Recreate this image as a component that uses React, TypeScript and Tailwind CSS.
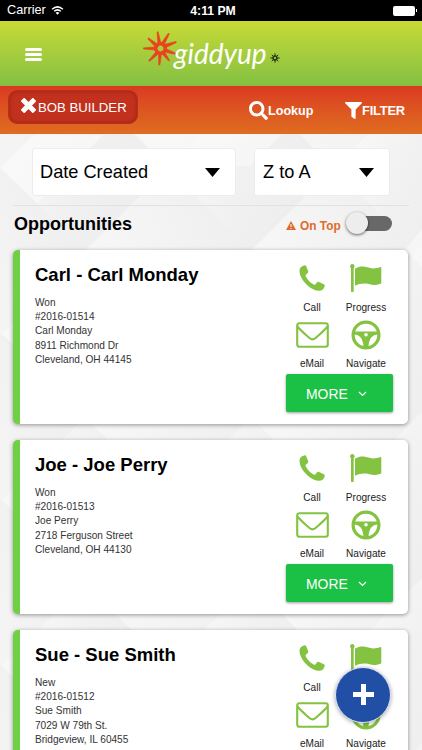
import type { ReactNode } from "react";
import { FaSearch, FaFilter } from "react-icons/fa";

const opportunities = [
  {
    title: "Carl - Carl Monday",
    lines: ["Won", "#2016-01514", "Carl Monday", "8911 Richmond Dr", "Cleveland, OH 44145"],
  },
  {
    title: "Joe - Joe Perry",
    lines: ["Won", "#2016-01513", "Joe Perry", "2718 Ferguson Street", "Cleveland, OH 44130"],
  },
  {
    title: "Sue - Sue Smith",
    lines: ["New", "#2016-01512", "Sue Smith", "7029 W 79th St.", "Bridgeview, IL 60455"],
  },
];

function PhoneIcon() {
  return (
    <svg width="26" height="26" viewBox="0 0 26 26" fill="currentColor">
      <path d="M5.200 .4C6.300 .1 6.800 .4 7.200 1.300L9.100 6C9.500 7 9.300 7.500 8.500 8.200L7 9.600C6.400 10.200 6.400 10.800 6.800 11.600C8.800 15.300 11.300 17.700 14.600 19.500C15.400 19.900 16 19.800 16.500 19.200L17.900 17.500C18.500 16.800 19.100 16.700 20 17.100L24.800 19.200C25.600 19.600 25.900 20.100 25.700 21C25 24 23.300 25.700 20.200 25.800C16.500 25.900 12 23.700 8 19.900C3.700 15.700 .7 10.600 .5 6.200C.4 3 1.900 1.200 5.200 .4Z" />
    </svg>
  );
}

function FlagIcon() {
  return (
    <svg width="32" height="28" viewBox="0 0 32 28" fill="currentColor">
      <circle cx="2.3" cy="2.3" r="2.2" />
      <rect x="1" y="3" width="2.7" height="25" rx="0.8" />
      <path d="M5 4.600C8.500 2.600 11.500 2.200 15 2.700C20 3.600 23 5.900 30.500 3Q31.300 2.800 31.300 3.700V18.700Q31.300 19.500 30.500 19.800C23 22.500 20 19.900 15.500 19.500C11.500 19.300 8.500 20.100 5 21.800Z" />
    </svg>
  );
}

function MailIcon() {
  return (
    <svg className="mt-[2px]" width="33" height="26" viewBox="0 0 33 26" fill="none" stroke="currentColor" strokeWidth="2.100">
      <rect x="1.200" y="1.200" width="30.600" height="23.600" rx="2.200" />
      <path d="M1.500 4.500C5.500 9.500 10 12.800 13.500 16Q16.500 18.600 19.500 16C23 12.800 27.500 9.500 31.500 4.500" />
    </svg>
  );
}

function WheelIcon() {
  return (
    <svg className="mt-[2px]" width="30" height="30" viewBox="0 0 30 30" fill="none" stroke="currentColor">
      <circle cx="15" cy="15" r="12.900" strokeWidth="3.200" />
      <path
        d="M3 11.500H27V14.600C21.500 14.600 17.900 18.500 17.500 27H12.500C12.100 18.500 8.500 14.600 3 14.600Z"
        fill="currentColor"
        stroke="none"
      />
      <circle cx="15" cy="14.800" r="1.800" fill="#fff" stroke="none" />
    </svg>
  );
}

function Sunburst() {
  return (
    <svg className="h-[35px] w-[35px] shrink-0" viewBox="-17.5 -17.5 35 35">
      <circle r="4.700" fill="none" stroke="#e8441f" strokeWidth="3.400" />
      <g fill="#e8441f" stroke="#e8441f" strokeWidth=".7" strokeLinejoin="round">
        <path d="M-2.600-5L-3.400-16.500L-2.400-16.700L.4-5z" />
        <path d="M.8-5.300L7.800-15.200L8.800-14.700L3.600-3.600z" />
        <path d="M3.800-4L15.400-7L15.900-6L5.500-1z" />
        <path d="M5.600 .2L15.800 5L15.400 6L4.300 3.500z" />
        <path d="M4.200 3.400L9.100 12L8.200 12.600L1.500 5.200z" />
        <path d="M1 5.300L-.7 16.500L-1.700 16.500L-1.900 5z" />
        <path d="M-1.900 5.200L-11 12.900L-11.800 12.100L-4.500 3.300z" />
        <path d="M-5.200 1.500L-17 .4L-17-.6L-5.300-1.400z" />
        <path d="M-5.200-1.500L-12.800-9.900L-12-10.600L-3-4.400z" />
      </g>
    </svg>
  );
}

// 45 degree tiles, 166px from corner to corner
function Backdrop() {
  return (
    <svg className="absolute inset-0" width="422" height="750" viewBox="0 0 422 750">
      <defs>
        <linearGradient id="tileA" x1="0" y1="0.3" x2="1" y2="0.7">
          <stop offset="0" stopColor="#fafafa" />
          <stop offset="0.45" stopColor="#f1f1f2" />
          <stop offset="1" stopColor="#ececee" />
        </linearGradient>
        <linearGradient id="tileB" x1="0" y1="0.7" x2="1" y2="0.3">
          <stop offset="0" stopColor="#f8f8f8" />
          <stop offset="1" stopColor="#eeeeef" />
        </linearGradient>
      </defs>
      <rect width="422" height="750" fill="#f4f4f5" />
      {[168, 334, 500, 666, 832].map((y) =>
        [2, 168, 334].map((x) => (
          <g key={`${x}-${y}`}>
            <path d={`M${x} ${y}l83-83 83 83-83 83z`} fill="url(#tileA)" />
            <path d={`M${x - 83} ${y - 83}l83-83 83 83-83 83z`} fill="url(#tileB)" />
          </g>
        ))
      )}
      <path d="M0 168l33-33h70l-66 68zM422 229l-17 21 17 17z" fill="#fafafa" opacity="0.7" />
      <path d="M137 134h145l-32 32h-83z" fill="#fafafa" opacity="0.6" />
    </svg>
  );
}

function Action({ label, children }: { label: string; children: ReactNode }) {
  return (
    <div className="flex h-14 w-[54px] flex-col items-center text-[#84c341]">
      <div className="mb-[8px] flex h-[30px] items-center">{children}</div>
      <span className="whitespace-nowrap text-[10.100px] leading-[14px] text-[#222]">{label}</span>
    </div>
  );
}

function Card({ title, lines }: { title: string; lines: string[] }) {
  return (
    <article className="flex h-[174px] shrink-0 justify-between rounded-[5px] border-l-[7px] border-[#6fd044] bg-white px-[15px] shadow-[0_1px_4px_rgba(0,0,0,0.4)]">
      <div className="pt-[13px]">
        <h2 className="mb-[9px] whitespace-nowrap text-[18.500px] font-bold leading-6 text-black">{title}</h2>
        {lines.map((line) => (
          <p key={line} className="text-[10.100px] leading-[14.200px] text-[#333]">
            {line}
          </p>
        ))}
      </div>
      <div className="flex w-[108px] flex-col pt-[13px]">
        <div className="grid grid-cols-2">
          <Action label="Call"><PhoneIcon /></Action>
          <Action label="Progress"><FlagIcon /></Action>
          <Action label="eMail"><MailIcon /></Action>
          <Action label="Navigate"><WheelIcon /></Action>
        </div>
        <button className="-mt-px ml-px flex h-[38px] shrink-0 items-center gap-[10px] rounded-[2px] bg-[#1bc145] pl-[20px] pt-[2px] text-[13.900px] text-white shadow-[0_1px_3px_rgba(0,0,0,0.4)]">
          MORE
          <svg width="9" height="6" viewBox="0 0 9 6" fill="none" stroke="currentColor" strokeWidth="1.200">
            <path d="M1 1l3.500 3.500L8 1" />
          </svg>
        </button>
      </div>
    </article>
  );
}

export default function App() {
  return (
    <div className="relative h-[750px] w-[422px] overflow-hidden bg-[#f3f3f4] font-['Liberation_Sans',sans-serif]">
      <Backdrop />
      <div className="relative flex flex-col">
        <div className="grid h-[21px] grid-cols-3 items-center bg-black pl-[7px] pr-[5px] text-white">
          <div className="flex items-center gap-[5px] pt-px text-[12.700px]">
            Carrier
            <svg width="13" height="9" viewBox="0 0 12 9" fill="none" stroke="white" strokeWidth="1.500">
              <path d="M.6 3.200Q6-1.500 11.400 3.200M2.700 5.300Q6 2.500 9.300 5.300" />
              <path d="M6 8.700L4.100 6.700Q6 5.300 7.900 6.700z" fill="white" stroke="none" />
            </svg>
          </div>
          <span className="pl-[2px] pt-px text-center text-[12.200px] font-bold">4:11 PM</span>
          <div className="flex items-center justify-end gap-px">
            <div className="h-[10px] w-[22px] rounded-[2px] bg-white" />
            <div className="h-[3px] w-px bg-white" />
          </div>
        </div>

        <header className="flex h-[65px] bg-linear-to-b from-[#c7da35] to-[#82c042]">
          <button className="ml-[25px] mt-[27px] flex h-[13px] w-[17px] flex-col justify-between">
            <span className="h-[3px] w-full rounded-sm bg-white" />
            <span className="h-[3px] w-full rounded-sm bg-white" />
            <span className="h-[3px] w-full rounded-sm bg-white" />
          </button>
          <div className="ml-[101px] flex pt-[10px]">
            <Sunburst />
            <span className="-ml-[4px] mt-[4px] w-[96px] font-['Lato','Liberation_Sans',sans-serif] text-[28px] italic leading-9 text-white">
              giddyup
            </span>
            <svg className="mt-[22px]" width="10" height="10" viewBox="-5 -5 10 10" fill="none" stroke="#27351a">
              <circle r="1.900" strokeWidth="1.500" />
              <path d="M0-2V-4.700M0 2V4.700M-2 0H-4.700M2 0H4.700M-1.500-1.500L-3.300-3.300M1.500-1.500L3.300-3.300M-1.500 1.500L-3.300 3.300M1.500 1.500L3.300 3.300" />
            </svg>
          </div>
        </header>

        <nav className="flex h-12 bg-linear-to-b from-[#da3921] to-[#df6c21] text-white">
          <button className="ml-2 mt-1 flex h-[34px] w-[130px] items-center rounded-[9px] border border-[#b6301b] bg-[#c2311d] pl-3 text-[13.200px] shadow-[inset_0_0_4px_rgba(100,0,0,0.4)]">
            <svg className="-mt-1 mr-[2px]" width="15" height="15" viewBox="0 0 15 15">
              <path d="M3.200 3.200L11.800 11.800M11.800 3.200L3.200 11.800" stroke="white" strokeWidth="5" strokeLinecap="square" />
            </svg>
            <span className="pt-px">BOB BUILDER</span>
          </button>
          <button className="ml-[111px] flex w-[65px] items-center pt-px text-[12.600px] font-bold">
            <FaSearch size={19} />
            <span className="pt-px">Lookup</span>
          </button>
          <button className="ml-[31px] flex items-center pt-px text-[12.900px] font-bold tracking-[-0.2px]">
            <FaFilter size={17} />
            FILTER
          </button>
        </nav>

        <main className="px-[13px]">
          <div className="flex h-[72px] gap-[19px] border-b border-[#e2e2e3] pl-[19px] pt-[14px]">
            <div className="flex h-12 w-[204px] items-center justify-between rounded-[3px] border border-[#ececec] bg-white pl-[7px] pr-[15px] text-[18.200px] text-black">
              <span className="pt-[2px]">Date Created</span>
              <svg width="15" height="9" viewBox="0 0 15 9"><path d="M0 0h15L7.500 9z" /></svg>
            </div>
            <div className="-ml-px flex h-12 w-[136px] items-center justify-between rounded-[3px] border border-[#ececec] bg-white pl-[8px] pr-[15px] text-[18.200px] text-black">
              <span className="pt-[2px]">Z to A</span>
              <svg width="15" height="9" viewBox="0 0 15 9"><path d="M0 0h15L7.500 9z" /></svg>
            </div>
          </div>
          <div className="flex h-11 items-start">
            <h1 className="mt-[6px] w-[273px] pl-px text-[18px] font-bold leading-6 text-black">Opportunities</h1>
            <svg className="mt-[15px]" width="10" height="9" viewBox="0 0 10 9">
              <path d="M5 0L10 9H0z" fill="#df6b2a" />
              <path d="M5 3v3M5 7v1" stroke="white" />
            </svg>
            <span className="ml-1 mt-[12px] text-[11.900px] font-bold leading-4 text-[#df6b2a]">On Top</span>
            <div className="ml-[5px] mt-[5px] flex h-6 w-[46px] items-center">
              <div className="z-10 size-[22px] shrink-0 rounded-full bg-[#ededed] shadow-[0_1px_3px_rgba(0,0,0,0.6)]" />
              <div className="-ml-3 mt-px h-[15px] w-9 rounded-full bg-[#686868]" />
            </div>
          </div>
          <div className="flex w-[395px] flex-col gap-4">
            {opportunities.map((item) => (
              <Card key={item.title} {...item} />
            ))}
          </div>
        </main>
      </div>

      <button className="absolute left-[335px] top-[667px] flex size-14 items-center justify-center rounded-full border border-[#dfe6f4] bg-[#214fa6] shadow-[0_1px_4px_rgba(0,0,0,0.35)]">
        <svg className="-mt-[2px]" width="21" height="21" viewBox="0 0 21 21">
          <path d="M10.500 0V21M0 10.500H21" stroke="white" strokeWidth="5" />
        </svg>
      </button>
    </div>
  );
}
